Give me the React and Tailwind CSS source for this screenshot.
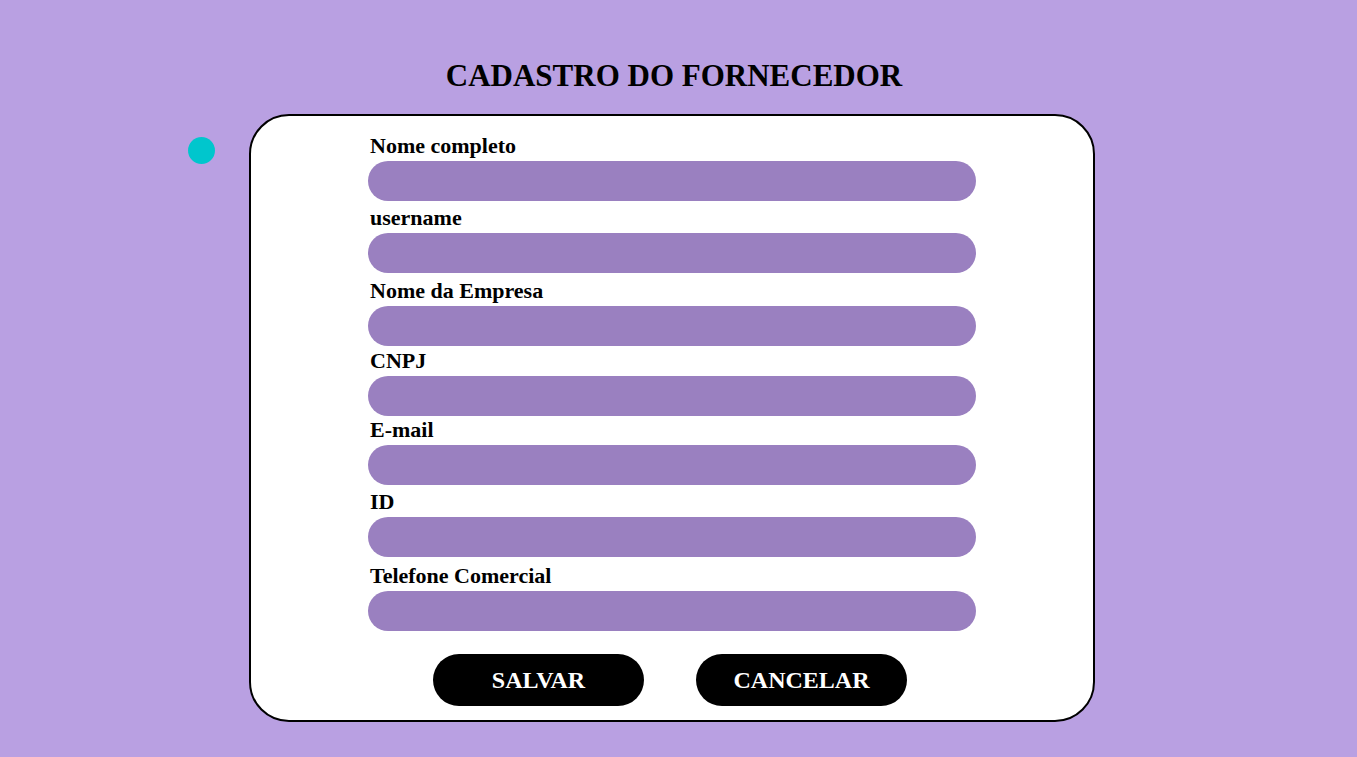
const fields = [
  { label: 'Nome completo', mt: 'mt-0' },
  { label: 'username', mt: 'mt-[6px]' },
  { label: 'Nome da Empresa', mt: 'mt-[7px]' },
  { label: 'CNPJ', mt: 'mt-[4px]' },
  { label: 'E-mail', mt: 'mt-[3px]' },
  { label: 'ID', mt: 'mt-[6px]' },
  { label: 'Telefone Comercial', mt: 'mt-[8px]' },
]

export default function App() {
  return (
    <div
      className="relative w-full min-h-[757px] bg-[#b9a0e2] flex flex-col"
      style={{ fontFamily: '"Liberation Serif", "DejaVu Serif", serif' }}
    >
      <h1 className="mt-[57px] ml-[444px] w-[460px] text-center text-[31px] leading-[38px] font-bold text-black whitespace-nowrap">CADASTRO DO FORNECEDOR</h1>

      <div className="absolute left-[188px] top-[137px] w-[27px] h-[27px] rounded-full bg-[#00c6cd]" />

      <div className="mt-[19px] ml-[249px] w-[846px] h-[608px] bg-white border-2 border-black rounded-[40px] flex flex-col items-center pt-[19px]">
        <div className="w-[608px] flex flex-col">
          {fields.map(f => (
            <div key={f.label} className={`${f.mt} flex flex-col`}>
              <label className="pl-[2px] text-[22px] leading-[22px] font-bold text-black mb-[4px]">{f.label}</label>
              <input className="w-full h-[40px] rounded-[20px] bg-[#9a80c0] outline-none px-4" />
            </div>
          ))}
        </div>
        <div className="mt-[23px] mr-[4px] flex gap-[52px]">
          <button className="w-[211px] h-[52px] rounded-[26px] bg-black text-white text-[24px] font-bold">SALVAR</button>
          <button className="w-[211px] h-[52px] rounded-[26px] bg-black text-white text-[24px] font-bold">CANCELAR</button>
        </div>
      </div>
    </div>
  )
}
